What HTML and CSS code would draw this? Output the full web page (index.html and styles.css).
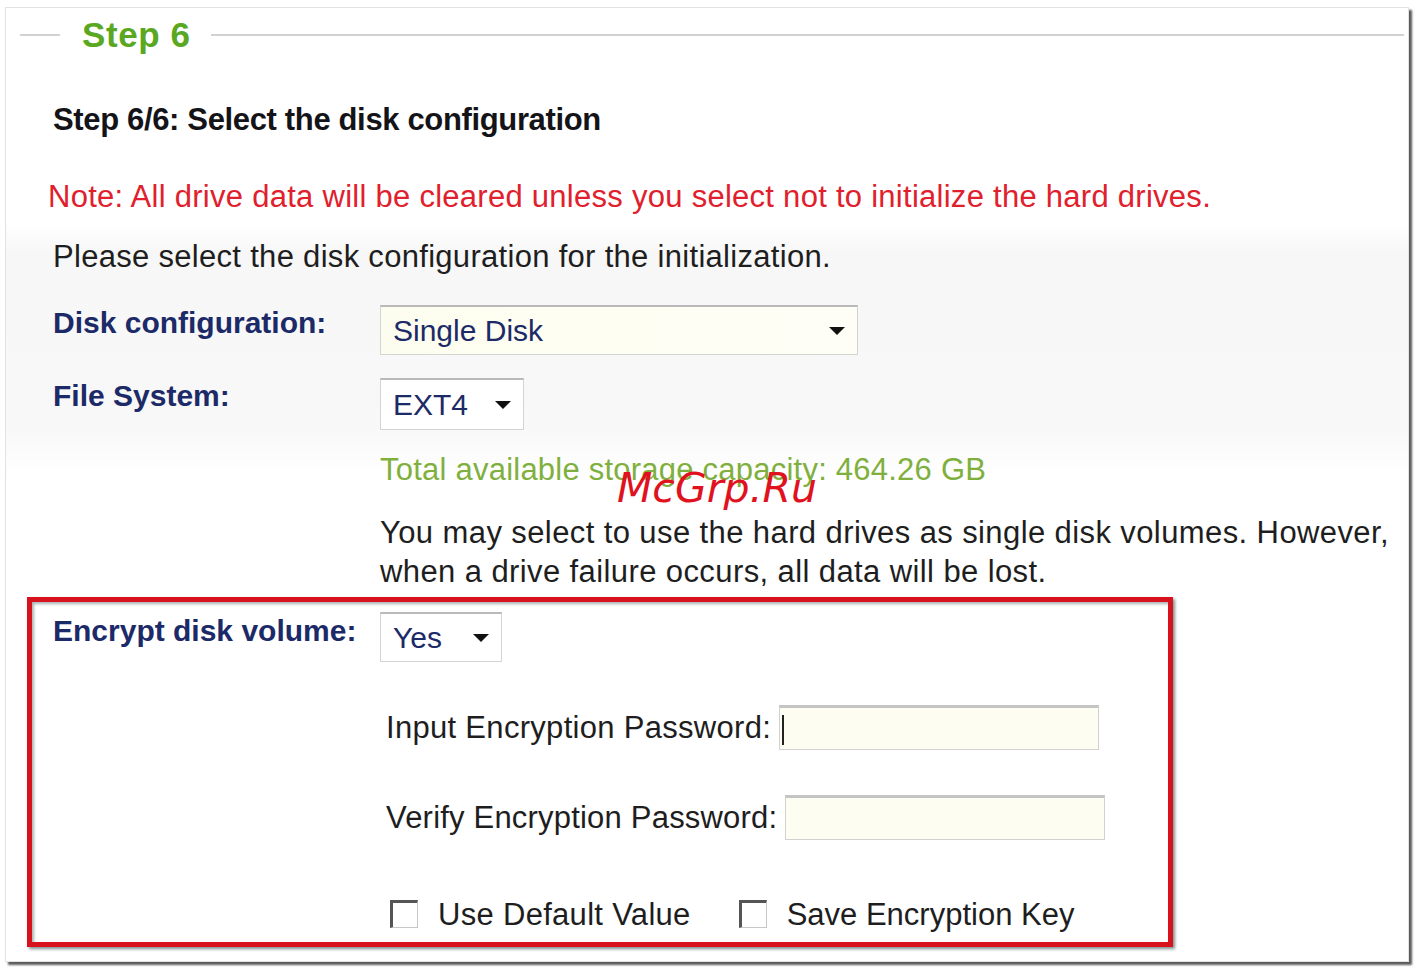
FILE: index.html
```html
<!DOCTYPE html>
<html>
<head>
<meta charset="utf-8">
<link rel="stylesheet" href="styles.css">
</head>
<body>
<div class="frame">
  <div class="legend"><span class="legend-text">Step 6</span></div>
  <div class="content">
    <div class="title">Step 6/6: Select the disk configuration</div>
    <div class="note">Note: All drive data will be cleared unless you select not to initialize the hard drives.</div>
    <div class="text please">Please select the disk configuration for the initialization.</div>
    <div class="row row-disk">
      <div class="label">Disk configuration:</div>
      <div class="select select-wide"><span>Single Disk</span><i class="arrow"></i></div>
    </div>
    <div class="row row-fs">
      <div class="label">File System:</div>
      <div class="control">
        <div class="select select-ext"><span>EXT4</span><i class="arrow"></i></div>
        <div class="capacity">Total available storage capacity: 464.26 GB</div>
        <div class="text desc">You may select to use the hard drives as single disk volumes. However,<br>when a drive failure occurs, all data will be lost.</div>
      </div>
    </div>
    <div class="redbox">
      <div class="row row-enc">
        <div class="label">Encrypt disk volume:</div>
        <div class="control">
          <div class="select select-yes"><span>Yes</span><i class="arrow"></i></div>
          <div class="pw pw-input"><span class="text">Input Encryption Password:</span><div class="field"><i class="caret"></i></div></div>
          <div class="pw pw-verify"><span class="text">Verify Encryption Password:</span><div class="field"></div></div>
          <div class="checks">
            <label class="check"><span class="box"></span><span class="text">Use Default Value</span></label>
            <label class="check"><span class="box"></span><span class="text">Save Encryption Key</span></label>
          </div>
        </div>
      </div>
    </div>
  </div>
  <div class="watermark">McGrp.Ru</div>
</div>
</body>
</html>
```

FILE: styles.css
```css
html, body { margin: 0; padding: 0; background: #fff; }
body { width: 1420px; height: 973px; overflow: hidden; font-family: "Liberation Sans", Arial, sans-serif; }

.frame {
  position: relative;
  box-sizing: border-box;
  margin: 7px 0 0 5px;
  width: 1404px;
  height: 955px;
  border: 1px solid #e2e2e2;
  box-shadow: 3px 3px 2px #5a5a5a;
  background: linear-gradient(180deg, #ffffff 0px, #ffffff 215px, #f7f7f7 245px, #f8f8f8 420px, #ffffff 470px, #ffffff 100%);
}

.legend {
  display: flex;
  align-items: center;
  margin: 7px 4px 0 14px;
  height: 40px;
}
.legend::before { content: ""; width: 40px; height: 2px; background: #d2d2d2; margin-right: 22px; }
.legend::after { content: ""; flex: 1; height: 2px; background: #d2d2d2; margin-left: 20px; }
.legend-text { font-weight: bold; font-size: 35px; color: #5aa722; letter-spacing: 0.6px; line-height: 40px; }

.content { padding-left: 47px; }

.title { margin-top: 47px; font-weight: bold; font-size: 31px; line-height: 36px; color: #141418; letter-spacing: -0.35px; }
.note { margin-top: 41px; margin-left: -5px; font-size: 31px; line-height: 36px; color: #e0202c; letter-spacing: 0.27px; }
.text { font-size: 31px; line-height: 36px; color: #1e1e1e; letter-spacing: 0.3px; }
.please { margin-top: 24px; }

.row { display: grid; grid-template-columns: 327px 1fr; align-items: start; }
.label { font-weight: bold; font-size: 30px; line-height: 36px; color: #1c2a68; letter-spacing: 0; }
.row-disk { margin-top: 30px; }
.row-fs { margin-top: 23px; }

.select {
  box-sizing: border-box;
  height: 50px;
  display: flex;
  align-items: center;
  justify-content: space-between;
  padding: 0 12px 0 12px;
  border: 1px solid #d4d4d4;
  border-top: 2px solid #b9b9b9;
  background: linear-gradient(90deg, #fdfdef, #fefef6);
  font-size: 30px;
  color: #1c2a68;
}
.select span { line-height: 36px; }
.arrow { width: 0; height: 0; border-left: 8px solid transparent; border-right: 8px solid transparent; border-top: 8px solid #111; display: block; }
.select-wide { width: 478px; }
.select-ext { width: 144px; height: 52px; background: #fff; }
.select-yes { width: 122px; background: #fff; }

.capacity { margin-top: 22px; font-size: 31px; line-height: 36px; color: #7fb03e; letter-spacing: 0.23px; }
.desc { margin-top: 25px; line-height: 39px; letter-spacing: 0.4px; }

.redbox {
  box-sizing: border-box;
  margin: 6px 0 0 -26px;
  width: 1146px;
  height: 350px;
  border: 5px solid #d8121c;
  box-shadow: 2px 2px 3px #7f8f8f, inset 2px 2px 3px #a9b4b4;
  padding: 10px 0 0 21px;
  background: #fff;
}
.row-enc .label { margin-top: 1px; }

.pw { display: flex; align-items: center; margin-left: 6px; }
.pw .text { line-height: 36px; }
.pw-input { margin-top: 43px; }
.pw-verify { margin-top: 45px; }
.pw-verify .text { letter-spacing: 0.2px; }
.field {
  box-sizing: border-box;
  width: 320px;
  height: 45px;
  border: 1px solid #d2d2d2;
  border-top: 3px solid #c4c4c4;
  background: #fdfdf1;
  position: relative;
}
.pw-input .field { margin-left: 8px; }
.pw-verify .field { margin-left: 8px; }
.caret { position: absolute; left: 2px; top: 7px; width: 2px; height: 30px; background: #222; }

.checks { display: flex; align-items: center; margin-top: 55px; margin-left: 10px; gap: 48px; }
.check { display: flex; align-items: center; gap: 20px; }
.check:last-child .text { letter-spacing: 0px; }
.box {
  box-sizing: border-box;
  width: 28px; height: 28px;
  border: 1px solid #c8c8c8;
  border-top: 3px solid #555;
  border-left: 3px solid #555;
  background: #fff;
}
.check .text { line-height: 36px; margin-top: 2px; }

.watermark {
  position: absolute;
  left: 611px;
  top: 456px;
  font-family: "DejaVu Sans", sans-serif;
  font-style: italic;
  font-size: 41px;
  line-height: 48px;
  color: #e0121e;
}
```
